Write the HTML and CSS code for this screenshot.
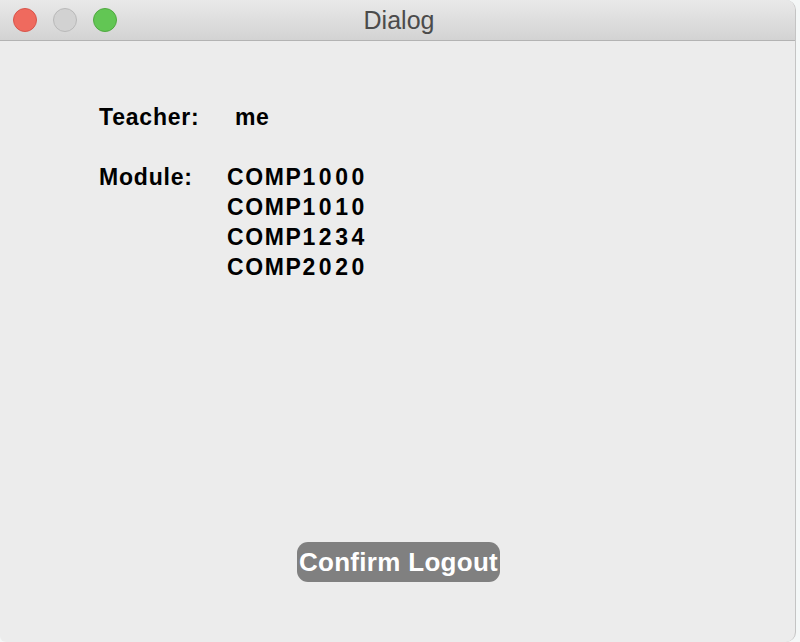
FILE: index.html
```html
<!DOCTYPE html>
<html>
<head>
<meta charset="utf-8">
<title>Dialog</title>
<link rel="stylesheet" href="styles.css">
</head>
<body>
<div class="window">
  <div class="titlebar">
    <div class="lights">
      <span class="light red"></span>
      <span class="light gray"></span>
      <span class="light green"></span>
    </div>
    <div class="title">Dialog</div>
    <div></div>
  </div>
  <div class="content">
    <div class="form">
      <div class="label">Teacher:</div>
      <div class="value teacher">me</div>
      <div class="label module-label">Module:</div>
      <div class="value modules">
        <div>COMP<span class="num">1000</span></div>
        <div>COMP<span class="num">1010</span></div>
        <div>COMP<span class="num">1234</span></div>
        <div>COMP<span class="num">2020</span></div>
      </div>
    </div>
  </div>
  <div class="actions">
    <button class="btn">Confirm Logout</button>
  </div>
</div>
</body>
</html>
```
FILE: styles.css
```css
html, body {
  margin: 0;
  padding: 0;
  background: #f4f7f7;
}
.window {
  width: 796px;
  height: 642px;
  box-sizing: border-box;
  background: #ececec;
  border-right: 1px solid #c4c4c4;
  border-radius: 0 10px 10px 6px;
  overflow: hidden;
  display: flex;
  flex-direction: column;
  font-family: "Liberation Sans", Arial, sans-serif;
}
.titlebar {
  height: 40px;
  flex: none;
  background: linear-gradient(#e9e9e9, #d3d3d3);
  border-bottom: 1px solid #b3b3b3;
  display: grid;
  grid-template-columns: 1fr auto 1fr;
  align-items: center;
}
.lights {
  display: flex;
  gap: 16px;
  padding-left: 13px;
}
.light {
  width: 22px;
  height: 22px;
  border-radius: 50%;
  border: 1px solid;
}
.light.red { background: #ef6a5e; border-color: #d8544a; }
.light.gray { background: #d2d2d2; border-color: #b9b9b9; }
.light.green { background: #62c654; border-color: #50a940; }
.title {
  font-size: 25px;
  color: #4b4b4b;
  padding-top: 1px;
  padding-left: 3px;
}
.content {
  flex: 1;
  padding: 61px 0 0 99px;
}
.form {
  display: grid;
  grid-template-columns: 128px auto;
  row-gap: 30px;
  font-size: 23px;
  font-weight: bold;
  line-height: 30px;
  color: #000;
}
.label {
  letter-spacing: 0.8px;
}
.teacher {
  margin-left: 8px;
  letter-spacing: 0.5px;
}
.modules {
  letter-spacing: 1.6px;
}
.modules .num {
  letter-spacing: 3.6px;
}
.actions {
  display: flex;
  justify-content: center;
  padding-bottom: 60px;
  padding-left: 2px;
}
.btn {
  height: 40px;
  padding: 0 2px;
  border: none;
  border-radius: 11px;
  background: #808080;
  color: #fff;
  font-family: "Liberation Sans", Arial, sans-serif;
  font-weight: bold;
  font-size: 26px;
  letter-spacing: 0.3px;
  line-height: 40px;
}
```
